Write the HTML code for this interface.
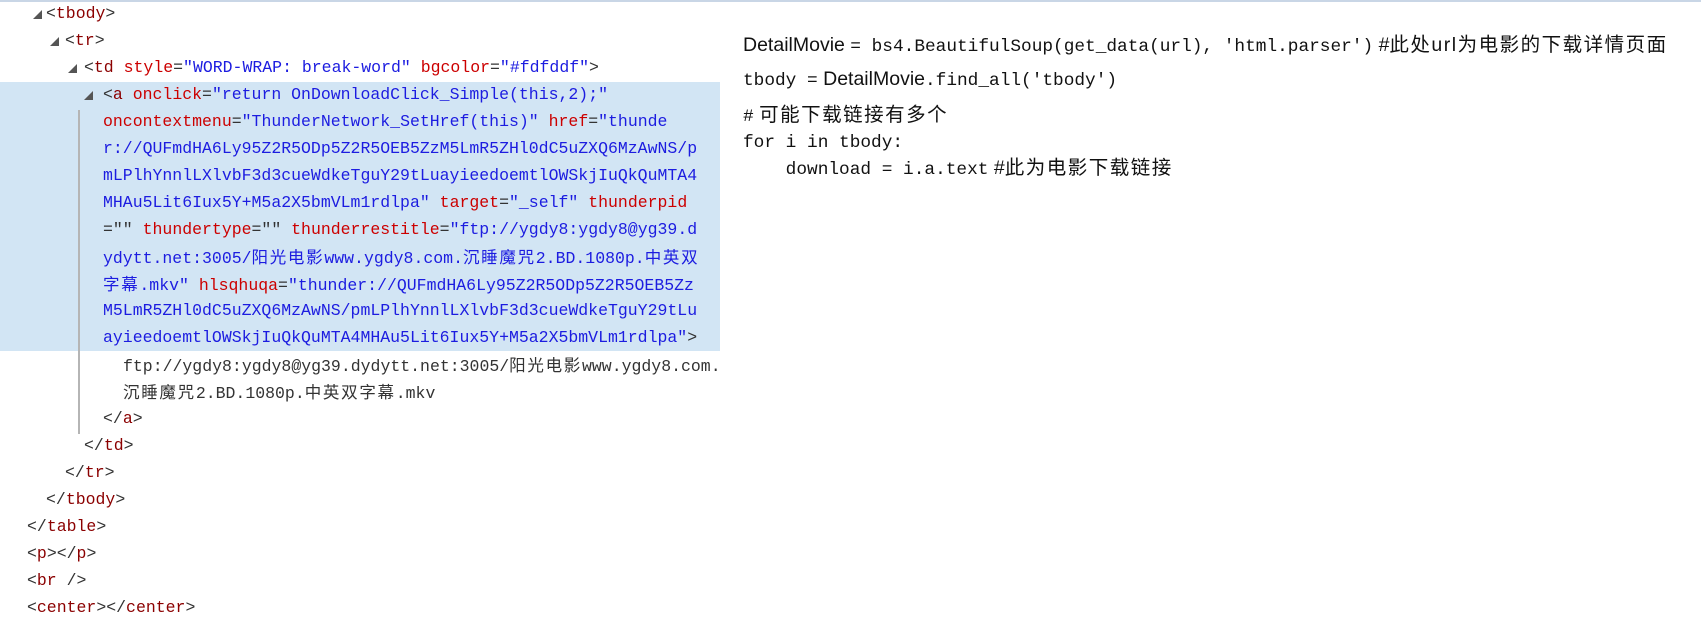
<!DOCTYPE html>
<html><head><meta charset="utf-8"><style>
html,body{margin:0;padding:0;background:#fff;width:1701px;height:633px;overflow:hidden;position:relative}
.top{position:absolute;left:0;top:0;width:1701px;height:2px;background:#c9d6e6}
.hl{position:absolute;left:0;top:82px;width:720px;height:269px;background:#d2e5f4}
.vl{position:absolute;left:78px;top:110px;width:2px;height:324px;background:#b5b5b5}
.l{position:absolute;white-space:pre;font-family:"Liberation Mono","Noto Sans CJK SC",monospace;font-size:16.5px;line-height:27px;height:27px;color:#333}
.t{color:#8b0000}.p{color:#333}.a{color:#cc0000}.v{color:#1c1ce0}
.c{letter-spacing:1.7px;font-family:"Noto Sans CJK SC",sans-serif}
.tri{position:absolute;width:0;height:0;border-left:9px solid transparent;border-bottom:9px solid #555}
.r{position:absolute;left:743px;white-space:pre;font-family:"Liberation Sans","Noto Sans CJK SC",sans-serif;font-size:19.5px;color:#111}
.m{font-family:"Liberation Mono",monospace;font-size:17.8px}
.k{letter-spacing:1.5px}
</style></head><body>
<div class="top"></div>
<div class="hl"></div>
<div class="vl"></div>
<div class="tri" style="left:33px;top:10px"></div>
<div class="tri" style="left:50px;top:37px"></div>
<div class="tri" style="left:68px;top:64px"></div>
<div class="tri" style="left:84px;top:91px"></div>
<div class="l" style="left:46px;top:0px"><span class="p">&lt;</span><span class="t">tbody</span><span class="p">&gt;</span></div>
<div class="l" style="left:65px;top:27px"><span class="p">&lt;</span><span class="t">tr</span><span class="p">&gt;</span></div>
<div class="l" style="left:84px;top:54px"><span class="p">&lt;</span><span class="t">td</span> <span class="a">style</span>=<span class="v">"WORD-WRAP: break-word"</span> <span class="a">bgcolor</span>=<span class="v">"#fdfddf"</span>&gt;</div>
<div class="l" style="left:103px;top:81px"><span class="p">&lt;</span><span class="t">a</span> <span class="a">onclick</span>=<span class="v">"return OnDownloadClick_Simple(this,2);"</span></div>
<div class="l" style="left:103px;top:108px"><span class="a">oncontextmenu</span>=<span class="v">"ThunderNetwork_SetHref(this)"</span> <span class="a">href</span>=<span class="v">"thunde</span></div>
<div class="l v" style="left:103px;top:135px">r://QUFmdHA6Ly95Z2R5ODp5Z2R5OEB5ZzM5LmR5ZHl0dC5uZXQ6MzAwNS/p</div>
<div class="l v" style="left:103px;top:162px">mLPlhYnnlLXlvbF3d3cueWdkeTguY29tLuayieedoemtlOWSkjIuQkQuMTA4</div>
<div class="l" style="left:103px;top:189px"><span class="v">MHAu5Lit6Iux5Y+M5a2X5bmVLm1rdlpa"</span> <span class="a">target</span>=<span class="v">"_self"</span> <span class="a">thunderpid</span></div>
<div class="l" style="left:103px;top:216px">="" <span class="a">thundertype</span>="" <span class="a">thunderrestitle</span>=<span class="v">"ftp://ygdy8:ygdy8@yg39.d</span></div>
<div class="l v" style="left:103px;top:243px">ydytt.net:3005/<span class="c">阳光电影</span>www.ygdy8.com.<span class="c">沉睡魔咒</span>2.BD.1080p.<span class="c">中英双</span></div>
<div class="l" style="left:103px;top:270px"><span class="v"><span class="c">字幕</span>.mkv"</span> <span class="a">hlsqhuqa</span>=<span class="v">"thunder://QUFmdHA6Ly95Z2R5ODp5Z2R5OEB5Zz</span></div>
<div class="l v" style="left:103px;top:297px">M5LmR5ZHl0dC5uZXQ6MzAwNS/pmLPlhYnnlLXlvbF3d3cueWdkeTguY29tLu</div>
<div class="l" style="left:103px;top:324px"><span class="v">ayieedoemtlOWSkjIuQkQuMTA4MHAu5Lit6Iux5Y+M5a2X5bmVLm1rdlpa"</span>&gt;</div>
<div class="l" style="left:123px;top:351px">ftp://ygdy8:ygdy8@yg39.dydytt.net:3005/<span class="c">阳光电影</span>www.ygdy8.com.</div>
<div class="l" style="left:123px;top:378px"><span class="c">沉睡魔咒</span>2.BD.1080p.<span class="c">中英双字幕</span>.mkv</div>
<div class="l" style="left:103px;top:405px">&lt;/<span class="t">a</span>&gt;</div>
<div class="l" style="left:84px;top:432px">&lt;/<span class="t">td</span>&gt;</div>
<div class="l" style="left:65px;top:459px">&lt;/<span class="t">tr</span>&gt;</div>
<div class="l" style="left:46px;top:486px">&lt;/<span class="t">tbody</span>&gt;</div>
<div class="l" style="left:27px;top:513px">&lt;/<span class="t">table</span>&gt;</div>
<div class="l" style="left:27px;top:540px">&lt;<span class="t">p</span>&gt;&lt;/<span class="t">p</span>&gt;</div>
<div class="l" style="left:27px;top:567px">&lt;<span class="t">br</span> /&gt;</div>
<div class="l" style="left:27px;top:594px">&lt;<span class="t">center</span>&gt;&lt;/<span class="t">center</span>&gt;</div>

<div class="r" style="top:28px">DetailMovie <span class="m">= bs4.BeautifulSoup(get_data(url), 'html.parser')</span> #<span class="k">此处url为电影的下载详情页面</span></div>
<div class="r" style="top:68px"><span class="m">tbody =</span> DetailMovie<span class="m">.find_all('tbody')</span></div>
<div class="r" style="top:98px"><span class="m">#</span> <span class="k">可能下载链接有多个</span></div>
<div class="r" style="top:130px"><span class="m">for i in tbody:</span></div>
<div class="r" style="top:151px"><span class="m">    download = i.a.text</span> #<span class="k">此为电影下载链接</span></div>
</body></html>
